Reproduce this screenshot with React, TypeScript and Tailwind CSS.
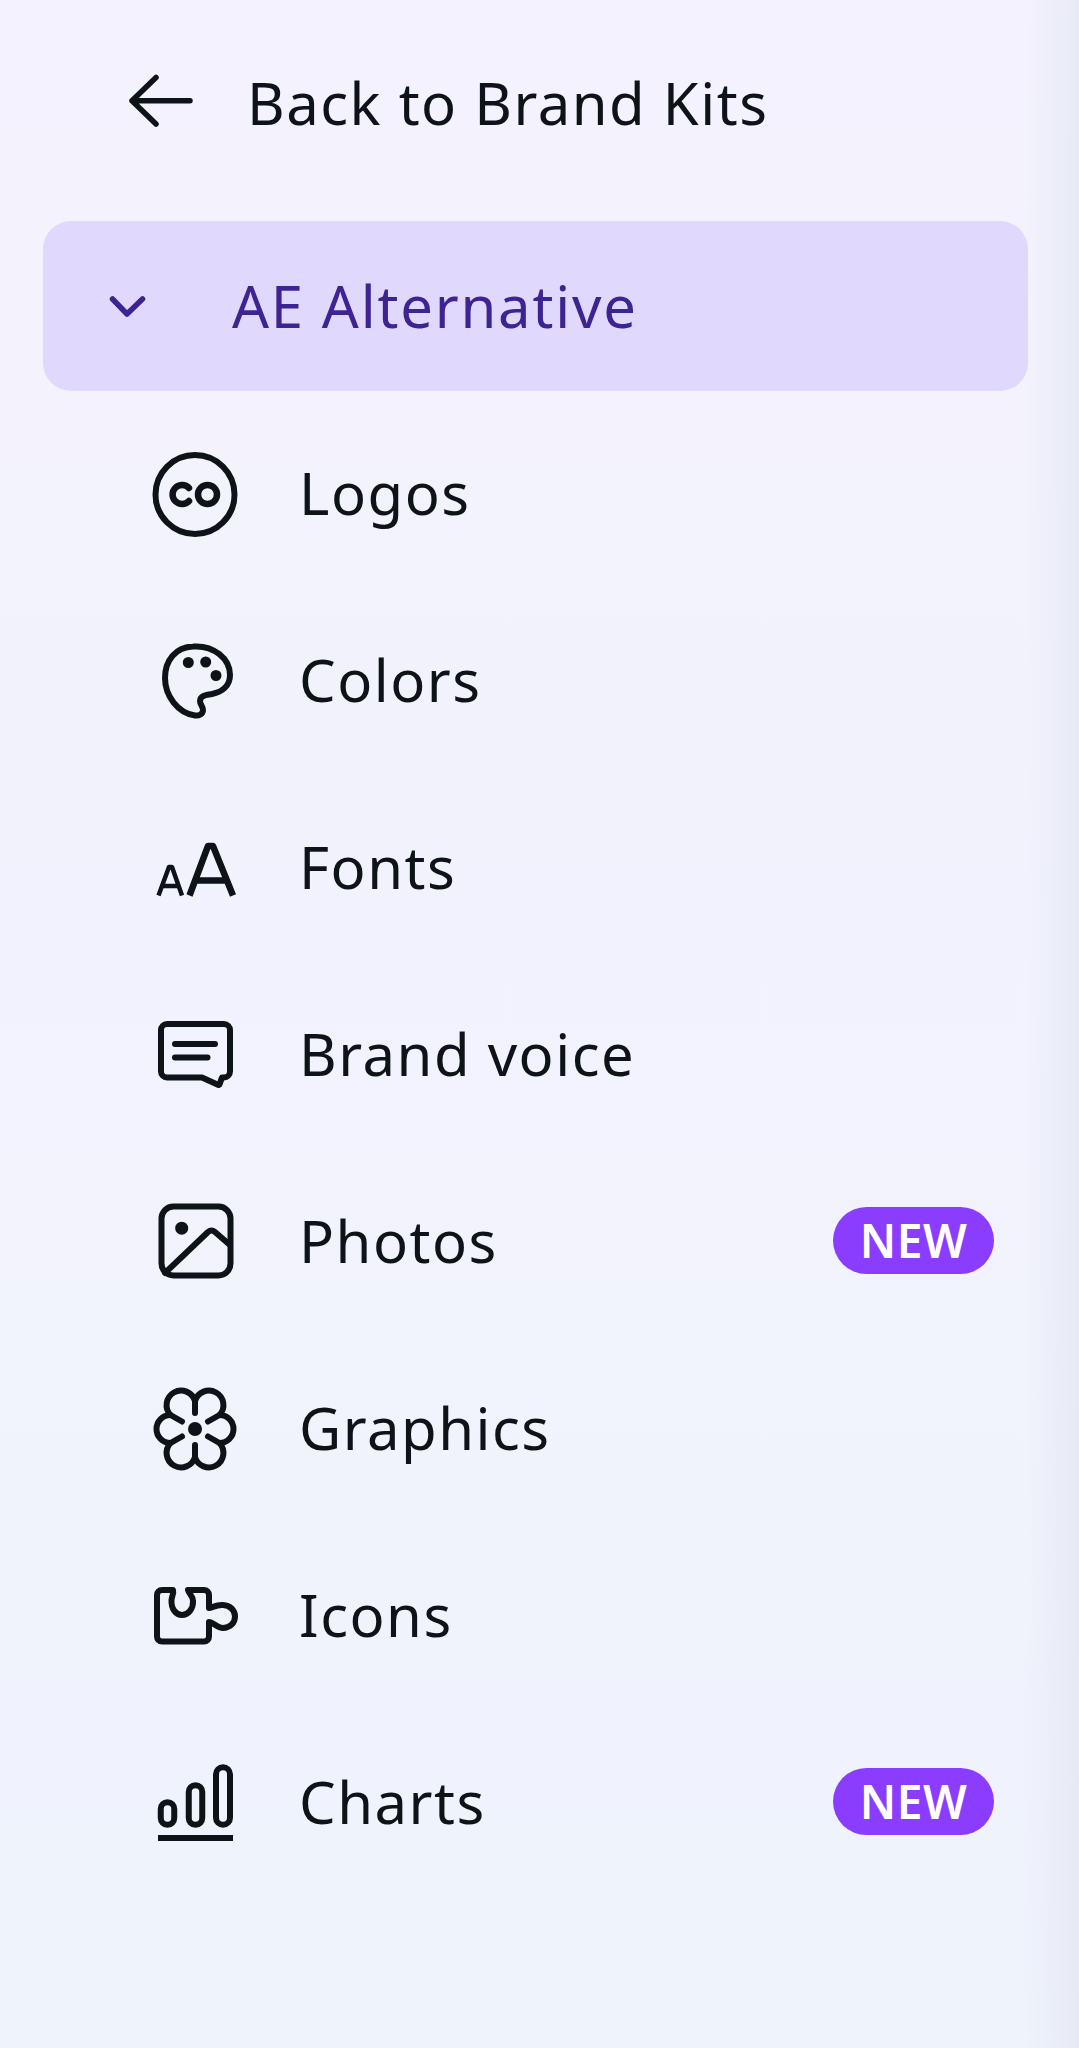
const rows = [
  { label: "Logos", icon: <LogosIcon /> },
  { label: "Colors", icon: <ColorsIcon /> },
  { label: "Fonts", icon: <FontsIcon /> },
  { label: "Brand voice", icon: <VoiceIcon /> },
  { label: "Photos", icon: <PhotosIcon />, isNew: true },
  { label: "Graphics", icon: <GraphicsIcon /> },
  { label: "Icons", icon: <PuzzleIcon /> },
  { label: "Charts", icon: <ChartsIcon />, isNew: true },
];

function Svg({ children }: { children: React.ReactNode }) {
  return (
    <svg width="96" height="96" viewBox="0 0 96 96" fill="none" stroke="#0e1318" strokeWidth="6" strokeLinecap="round" strokeLinejoin="round">
      {children}
    </svg>
  );
}

function LogosIcon() {
  return (
    <Svg>
      <circle cx="47" cy="49.500" r="39.500" />
      <path d="M41 43a9.500 9.500 0 1 0 0 13" strokeWidth="6.500" />
      <circle cx="59.500" cy="49.500" r="9.500" strokeWidth="6.500" />
    </Svg>
  );
}

function ColorsIcon() {
  return (
    <Svg>
      <path d="M45 14.500C66 13 82 27 82 43C82 54 74 60 64 62C57 63 52 64 52 69C52 73 55 74 55 78C55 82 51 84 47 83.500C30 81 17 64 17 46C17 28 28 15 45 14.500Z" />
      <circle cx="40.300" cy="30.500" r="4.500" fill="#0e1318" strokeWidth="2" />
      <circle cx="57.700" cy="30" r="4.500" fill="#0e1318" strokeWidth="2" />
      <circle cx="68" cy="43.500" r="4.500" fill="#0e1318" strokeWidth="2" />
    </Svg>
  );
}

function FontsIcon() {
  return (
    <Svg>
      <path d="M10.500 76.500 21 48h3l10 28.500M15 67h15" strokeWidth="4.500" strokeLinecap="butt" />
      <path d="M41.500 76.500 60 27h5l20 49.500M48 61.500h30" strokeWidth="6.500" strokeLinecap="butt" />
    </Svg>
  );
}

function VoiceIcon() {
  return (
    <Svg>
      <path d="M19 18H76a6 6 0 0 1 6 6V65.500a6 6 0 0 1-6 6h-2l-2.500 7-1 .5L54 71.500H19a6 6 0 0 1-6-6V24a6 6 0 0 1 6-6Z" />
      <path d="M27 38h40M27 51.500h32.500" />
    </Svg>
  );
}

function PhotosIcon() {
  return (
    <Svg>
      <rect x="13.500" y="13.500" width="69" height="69" rx="12" />
      <circle cx="33.700" cy="35.200" r="6.500" fill="#0e1318" stroke="none" />
      <path d="M17 80 60 39q3.500-3 7 0l15 13" />
    </Svg>
  );
}

function GraphicsIcon() {
  return (
    <Svg>
      <circle cx="47" cy="49" r="7" fill="#0e1318" stroke="none" />
      <path d="M47 21A14.500 14.500 0 1 1 71.500 35A14 14 0 1 1 71.500 63A14.500 14.500 0 1 1 47 77A14.500 14.500 0 1 1 22.500 63A14 14 0 1 1 22.500 35A14.500 14.500 0 1 1 47 21Z" />
      <path d="M47 21V33M47 65V77M60 41.500 71.500 35M34 41.500 22.500 35M34 56.500 22.500 63M60 56.500 71.500 63" />
    </Svg>
  );
}

function PuzzleIcon() {
  return (
    <Svg>
      <path d="M14 23H25C26 27 24 28 23.500 33C23 42 28 48 34 48C40 48 45.500 42 45 34C45 29 41 27 40 23H56a5 5 0 0 1 5 5V41C64 41 68 37.500 75 38C82 38.500 87 43 87 49.500C87 56 82 61 75 61C69 61 65 55 61 55V69.500a5 5 0 0 1-5 5H14a5 5 0 0 1-5-5V28a5 5 0 0 1 5-5Z" />
    </Svg>
  );
}

function ChartsIcon() {
  return (
    <Svg>
      <rect x="12.750" y="48.250" width="13.500" height="22.500" rx="6.750" />
      <rect x="40.750" y="31.250" width="13.500" height="39.500" rx="6.750" />
      <rect x="68" y="13.250" width="14" height="57.500" rx="7" />
      <path d="M10 84h75" strokeLinecap="butt" />
    </Svg>
  );
}

export default function App() {
  return (
    <div className="h-[2048px] w-[1079px] overflow-hidden bg-gradient-to-b from-[#f4f2fe] to-[#eff3fc] font-['Noto_Sans',sans-serif] text-[#0e1318]">
      <div className="flex h-full w-full bg-gradient-to-r from-transparent from-[95%] to-[#e7eaf5]">
        <div className="w-full pl-[43px] pr-[51px] pt-[68px]">
          <div className="flex h-[70px] items-center pl-[85px]">
            <svg width="66" height="66" viewBox="0 0 66 66" fill="none" stroke="#0e1318" strokeWidth="5.500" strokeLinecap="round" strokeLinejoin="round">
              <path d="M62 30.700H4M28 7.500 4 30.700l24 23.300" />
            </svg>
            <span className="ml-[53px] text-[58px] leading-none tracking-[1.5px]">Back to Brand Kits</span>
          </div>

          <div className="mt-[83px] flex h-[170px] items-center rounded-[28px] bg-[#e1d8fe] pl-[62px] text-[#3e2493]">
            <svg width="44" height="30" viewBox="0 0 44 30" fill="none" stroke="#3e2493" strokeWidth="5.500" strokeLinecap="round" strokeLinejoin="round">
              <path d="M7.500 8 22 23 37.500 8" />
            </svg>
            <span className="ml-[83px] text-[58px] leading-none tracking-[1.8px]">AE Alternative</span>
          </div>

          <div className="mt-[8px] flex flex-col">
            {rows.map((row) => (
              <div key={row.label} className="flex h-[187px] items-center pl-[105px] pr-[34px]">
                <div className="flex h-[96px] w-[96px] shrink-0 items-center justify-center">{row.icon}</div>
                <span className="ml-[55px] text-[58px] leading-none tracking-[1.5px]">{row.label}</span>
                {row.isNew && (
                  <span className="ml-auto flex h-[67px] w-[161px] items-center justify-center rounded-full bg-[#8b3dff] text-[46px] font-semibold tracking-[0.5px] text-white">
                    NEW
                  </span>
                )}
              </div>
            ))}
          </div>
        </div>
      </div>
    </div>
  );
}
